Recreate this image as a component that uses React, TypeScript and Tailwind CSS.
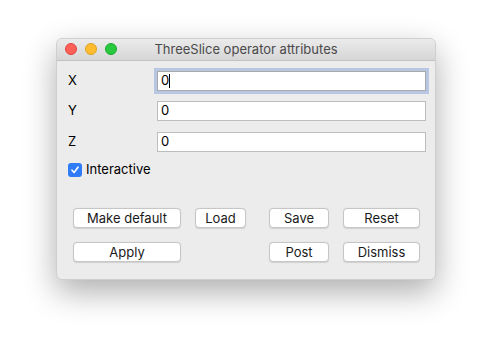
import React from "react";

function Btn({ label, w }: { label: string; w: string }) {
  return (
    <button
      className={`${w} h-[20px] rounded-[4px] border border-[#c6c6c6] bg-white text-[13px] leading-none text-[#1a1a1a] shadow-[0_0.5px_1px_rgba(0,0,0,0.12)] flex items-center justify-center`}
    >
      {label}
    </button>
  );
}

export default function App() {
  return (
    <div
      className="w-[492px] h-[354px] bg-white pt-[38px] pl-[56px]"
      style={{ fontFamily: "Inter, 'Liberation Sans', sans-serif" }}
    >
      <div className="w-[380px] h-[242px] rounded-[6px] bg-[#ececec] border border-[#cfcfcf] shadow-[0_12px_32px_rgba(0,0,0,0.32)] overflow-hidden flex flex-col">
        <div className="relative h-[22px] shrink-0 bg-gradient-to-b from-[#ebebeb] to-[#d6d6d6] border-b border-[#c2c2c2] flex items-center justify-center">
          <div className="absolute left-[8px] top-[4px] flex gap-[8px]">
            <span className="w-[12px] h-[12px] rounded-full bg-[#fe5f57] border border-[#e0443e]" />
            <span className="w-[12px] h-[12px] rounded-full bg-[#febc2e] border border-[#dea123]" />
            <span className="w-[12px] h-[12px] rounded-full bg-[#28c840] border border-[#1aab29]" />
          </div>
          <span className="text-[13px] text-[#4a4a4a] leading-none">ThreeSlice operator attributes</span>
        </div>
        <div className="flex flex-col pl-[11px] pr-[9px] pt-[10px]">
          <div className="flex items-center h-[20px]">
            <span className="w-[89px] text-[13px] text-black">X</span>
            <div className="flex-1 h-[20px] bg-white border border-[#a9a9a9] shadow-[0_0_0_3px_#b7c6e2] flex items-center pl-[3px] text-[13px] text-black">
              0<span className="w-[1px] h-[14px] bg-black" />
            </div>
          </div>
          <div className="flex items-center h-[20px] mt-[10px]">
            <span className="w-[89px] text-[13px] text-black">Y</span>
            <div className="flex-1 h-[20px] bg-white border border-[#bdbdbd] flex items-center pl-[3px] text-[13px] text-black">0</div>
          </div>
          <div className="flex items-center h-[20px] mt-[11px]">
            <span className="w-[89px] text-[13px] text-black">Z</span>
            <div className="flex-1 h-[20px] bg-white border border-[#bdbdbd] flex items-center pl-[3px] text-[13px] text-black">0</div>
          </div>
          <div className="flex items-center mt-[11px] h-[14px]">
            <span className="w-[14px] h-[14px] rounded-[3px] bg-[#2f7cf6] flex items-center justify-center">
              <svg width="10" height="10" viewBox="0 0 10 10">
                <path d="M2 5.2 L4.1 7.5 L8 2.2" stroke="white" strokeWidth="1.6" fill="none" strokeLinecap="round" strokeLinejoin="round" />
              </svg>
            </span>
            <span className="ml-[4px] text-[13px] text-black">Interactive</span>
          </div>
          <div className="flex mt-[31px] pl-[5px]">
            <Btn label="Make default" w="w-[108px]" />
            <div className="ml-[14px]"><Btn label="Load" w="w-[51px]" /></div>
            <div className="ml-[23px]"><Btn label="Save" w="w-[60px]" /></div>
            <div className="ml-[14px]"><Btn label="Reset" w="w-[77px]" /></div>
          </div>
          <div className="flex mt-[14px] pl-[5px]">
            <Btn label="Apply" w="w-[108px]" />
            <div className="ml-[88px]"><Btn label="Post" w="w-[60px]" /></div>
            <div className="ml-[14px]"><Btn label="Dismiss" w="w-[77px]" /></div>
          </div>
        </div>
      </div>
    </div>
  );
}
